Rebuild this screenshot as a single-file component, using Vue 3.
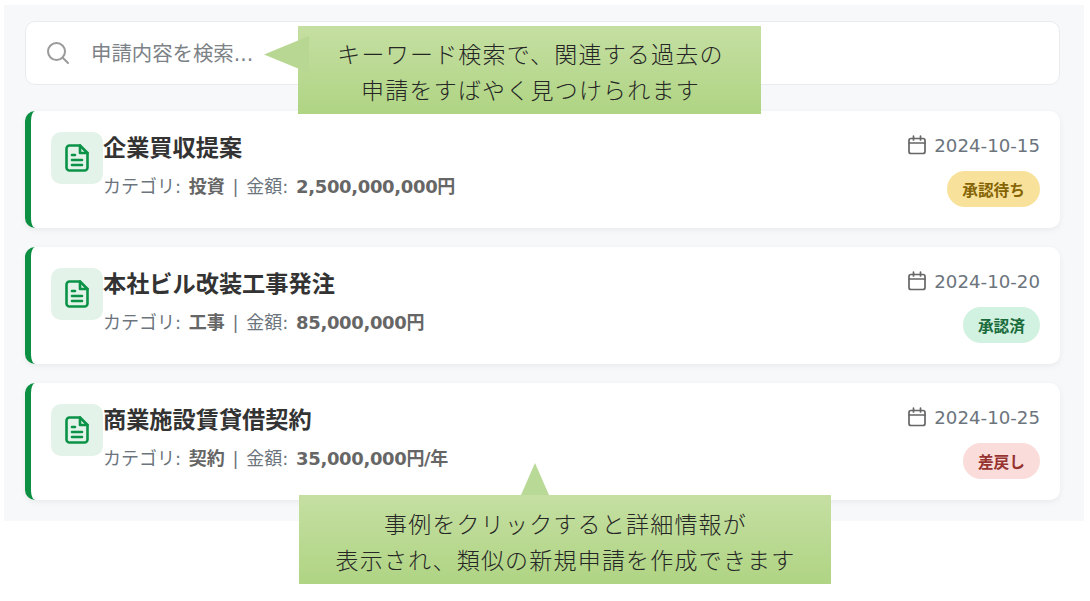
<script setup>
const cases = [
  { title: "企業買収提案", category: "投資", amount: "2,500,000,000円", date: "2024-10-15", status: "承認待ち", kind: "pending" },
  { title: "本社ビル改装工事発注", category: "工事", amount: "85,000,000円", date: "2024-10-20", status: "承認済", kind: "approved" },
  { title: "商業施設賃貸借契約", category: "契約", amount: "35,000,000円/年", date: "2024-10-25", status: "差戻し", kind: "returned" },
];
</script>

<template>
  <div class="page">
    <div class="panel">
      <div class="search">
        <svg class="search-icon" viewBox="0 0 24 24" fill="none" stroke="currentColor" stroke-width="2" stroke-linecap="round">
          <circle cx="10.5" cy="10.5" r="8.5" />
          <path d="M17 17l5 5" />
        </svg>
        <span class="placeholder">申請内容を検索...</span>
      </div>
      <div class="list">
        <div v-for="item in cases" :key="item.title" class="card">
          <div class="doc">
            <svg viewBox="0 0 24 28" fill="none" stroke="currentColor" stroke-width="2.6" stroke-linecap="round" stroke-linejoin="round">
              <path d="M15 1.5H4.5a3 3 0 0 0-3 3v19a3 3 0 0 0 3 3h15a3 3 0 0 0 3-3V9z" />
              <path d="M15 1.5V9h7.5" />
              <path d="M7 11h3M7 16h10M7 21h10" />
            </svg>
          </div>
          <div class="body">
            <div class="title">{{ item.title }}</div>
            <div class="meta">カテゴリ: <b>{{ item.category }}</b> | 金額: <b class="amount">{{ item.amount }}</b></div>
          </div>
          <div class="side">
            <div class="date">
              <svg viewBox="0 0 20 20" fill="none" stroke="currentColor" stroke-width="1.7" stroke-linecap="round" stroke-linejoin="round">
                <rect x="2" y="3.5" width="16" height="15" rx="2" />
                <path d="M2 8h16M6.5 1v4M13.5 1v4" />
              </svg>
              {{ item.date }}
            </div>
            <span class="badge" :class="item.kind">{{ item.status }}</span>
          </div>
        </div>
      </div>
    </div>

    <div class="note note-search">
      <i class="tail tail-left"></i>
      キーワード検索で、関連する過去の<br />申請をすばやく見つけられます
    </div>
    <div class="note note-click">
      <i class="tail tail-up"></i>
      事例をクリックすると詳細情報が<br />表示され、類似の新規申請を作成できます
    </div>
  </div>
</template>

<style>
html, body {
  margin: 0;
  background: #fff;
}
</style>

<style scoped>
.page {
  position: relative;
  width: 1090px;
  height: 601px;
  overflow: hidden;
  padding: 5px 6px 0 4px;
  box-sizing: border-box;
  font-family: "DejaVu Sans", "Noto Sans CJK JP", sans-serif;
}

.panel {
  height: 516px;
  box-sizing: border-box;
  padding: 16px 24px 0 21px;
  background: #f7f8fa;
}

.search {
  display: flex;
  align-items: center;
  height: 64px;
  box-sizing: border-box;
  padding-left: 20px;
  gap: 21px;
  background: #fff;
  border: 1px solid #e9ecef;
  border-radius: 10px;
}

.search-icon {
  width: 24px;
  height: 24px;
  color: #9a9a9a;
}

.placeholder {
  margin-top: -2px;
  font-size: 20.4px;
  color: #7d8287;
}

.list {
  display: flex;
  flex-direction: column;
  gap: 19px;
  margin-top: 26px;
}

.card {
  display: flex;
  height: 117px;
  box-sizing: border-box;
  padding: 21px 20px 0 20px;
  background: #fff;
  border-left: 6px solid #0a8f43;
  border-radius: 10px;
  box-shadow: 0 2px 6px rgba(0, 0, 0, 0.06);
}

.doc {
  display: flex;
  align-items: center;
  justify-content: center;
  flex: none;
  width: 52px;
  height: 52px;
  border-radius: 10px;
  background: #e4f3ea;
  color: #0a9347;
}

.doc svg {
  width: 24px;
  height: 28px;
}

.body {
  flex: 1;
}

.title {
  font-size: 23.2px;
  font-weight: 700;
  line-height: 32px;
  color: #333;
}

.meta {
  margin-top: 11px;
  font-size: 18px;
  word-spacing: 2px;
  line-height: 24px;
  color: #6c757d;
}

.meta b {
  color: #666;
}

.meta .amount {
  letter-spacing: -0.35px;
}

.side {
  display: flex;
  flex-direction: column;
  align-items: flex-end;
  gap: 13px;
}

.date {
  display: flex;
  align-items: center;
  gap: 7px;
  height: 26px;
  font-size: 18.2px;
  color: #6c757d;
}

.date svg {
  width: 20px;
  height: 20px;
  color: #666;
}

.badge {
  display: flex;
  align-items: center;
  height: 36px;
  padding: 0 15px;
  border-radius: 18px;
  font-size: 15.7px;
  font-weight: 700;
}

.pending {
  background: #f8e29b;
  color: #856404;
}

.approved {
  background: #d1f2e0;
  color: #1a6b3c;
}

.returned {
  background: #fadcda;
  color: #96322f;
}

.note {
  position: absolute;
  box-sizing: border-box;
  text-align: center;
  font-family: "Noto Sans CJK JP", sans-serif;
  font-weight: 300;
  font-size: 23px;
  letter-spacing: 1.2px;
  line-height: 36px;
  color: #262626;
  background: linear-gradient(#c5dfa2, #afd483);
}

.note-search {
  left: 298px;
  top: 26px;
  width: 463px;
  height: 88px;
  padding: 9px 0 0 2px;
}

.note-click {
  left: 299px;
  top: 495px;
  width: 532px;
  height: 89px;
  padding: 10px 0 0 1px;
}

.tail {
  position: absolute;
  display: block;
}

.tail-left {
  left: -34px;
  top: 10px;
  width: 45px;
  height: 37px;
  clip-path: polygon(0 50%, 100% 0, 100% 100%);
  background: #b7d792;
}

.tail-up {
  left: 222px;
  top: -32px;
  width: 28px;
  height: 32px;
  clip-path: polygon(50% 0, 100% 100%, 0 100%);
  background: #b9d996;
}
</style>
